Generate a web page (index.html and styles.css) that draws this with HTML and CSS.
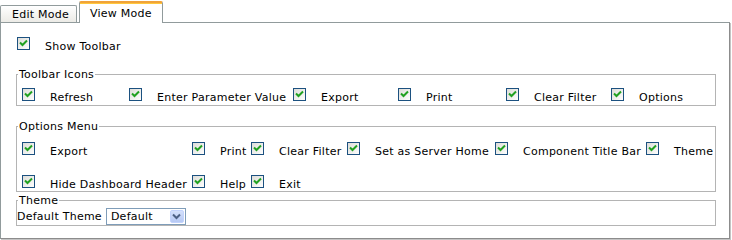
FILE: index.html
```html
<!DOCTYPE html>
<html>
<head>
<meta charset="utf-8">
<link rel="stylesheet" href="styles.css">
</head>
<body>
<svg width="0" height="0" class="defs" aria-hidden="true">
  <defs>
    <linearGradient id="cbg" x1="0" y1="0" x2="1" y2="1">
      <stop offset="0" stop-color="#dcdcd7"/>
      <stop offset="1" stop-color="#ffffff"/>
    </linearGradient>
    <symbol id="check" viewBox="0 0 13 13">
      <rect x="0.5" y="0.5" width="12" height="12" fill="url(#cbg)" stroke="#1c5180"/>
      <path d="M3 5.5 L5.5 8 L10 3.5" fill="none" stroke="#21a121" stroke-width="2"/>
    </symbol>
  </defs>
</svg>

<div class="tabs">
  <div class="tab">Edit Mode</div>
  <div class="tab active">View Mode</div>
</div>

<div class="panel">
  <label class="opt show"><svg class="cb"><use href="#check"/></svg>Show Toolbar</label>

  <fieldset class="group toolbar">
    <legend>Toolbar Icons</legend>
    <div class="grid tb-grid">
      <label class="opt"><svg class="cb"><use href="#check"/></svg>Refresh</label>
      <label class="opt"><svg class="cb"><use href="#check"/></svg>Enter Parameter Value</label>
      <label class="opt"><svg class="cb"><use href="#check"/></svg>Export</label>
      <label class="opt"><svg class="cb"><use href="#check"/></svg>Print</label>
      <label class="opt"><svg class="cb"><use href="#check"/></svg>Clear Filter</label>
      <label class="opt"><svg class="cb"><use href="#check"/></svg>Options</label>
    </div>
  </fieldset>

  <fieldset class="group options">
    <legend>Options Menu</legend>
    <div class="grid om-grid">
      <label class="opt"><svg class="cb"><use href="#check"/></svg>Export</label>
      <label class="opt"><svg class="cb"><use href="#check"/></svg>Print</label>
      <label class="opt"><svg class="cb"><use href="#check"/></svg>Clear Filter</label>
      <label class="opt"><svg class="cb"><use href="#check"/></svg>Set as Server Home</label>
      <label class="opt"><svg class="cb"><use href="#check"/></svg>Component Title Bar</label>
      <label class="opt"><svg class="cb"><use href="#check"/></svg>Theme</label>
      <label class="opt"><svg class="cb"><use href="#check"/></svg>Hide Dashboard Header</label>
      <label class="opt"><svg class="cb"><use href="#check"/></svg>Help</label>
      <label class="opt"><svg class="cb"><use href="#check"/></svg>Exit</label>
    </div>
  </fieldset>

  <fieldset class="group theme">
    <legend>Theme</legend>
    <div class="theme-row">
      <span class="theme-label">Default Theme</span>
      <div class="select">
        <span class="select-text">Default</span>
        <span class="select-btn">
          <svg width="9" height="7" viewBox="0 0 9 7"><path d="M1 1.5 L4.5 5 L8 1.5" fill="none" stroke="#4d6185" stroke-width="2"/></svg>
        </span>
      </div>
    </div>
  </fieldset>
</div>
</body>
</html>
```

FILE: styles.css
```css
* { box-sizing: border-box; }

html, body {
  margin: 0;
  padding: 0;
  background: #ffffff;
}

body {
  font-family: "DejaVu Sans", Verdana, sans-serif;
  font-size: 11px;
  line-height: 13px;
  letter-spacing: 0.25px;
  color: #000000;
  width: 732px;
  height: 240px;
  overflow: hidden;
}

.defs {
  position: absolute;
  width: 0;
  height: 0;
}

/* Tabs */
.tabs {
  display: flex;
  align-items: flex-end;
  height: 22px;
}

.tab {
  height: 17px;
  width: 77px;
  padding-left: 11px;
  padding-top: 2px;
  border: 1px solid #919b9c;
  border-bottom: none;
  border-radius: 2px 2px 0 0;
  background: linear-gradient(#ffffff, #ecebe6);
  white-space: nowrap;
}

.tab.active {
  position: relative;
  z-index: 2;
  height: 22px;
  width: 84px;
  margin-left: 2px;
  margin-bottom: -1px;
  padding-left: 10px;
  padding-top: 4px;
  background: #ffffff;
  border-top: 2px solid #f0a33a;
  box-shadow: inset 0 1px 0 #ffc83c;
}

/* Panel */
.panel {
  position: relative;
  z-index: 1;
  width: 730px;
  height: 217px;
  border: 1px solid #919b9c;
  border-right-color: #8c8c8c;
  border-bottom-color: #8c8c8c;
  box-shadow: 1px 1px 0 #c4c4c4;
  padding: 14px 0 0 15px;
  background: #ffffff;
}

.opt {
  white-space: nowrap;
}

.cb {
  width: 13px;
  height: 13px;
  margin-right: 15px;
  vertical-align: baseline;
}

.show {
  display: block;
  padding-left: 1px;
}

/* Fieldsets */
.group {
  margin: 0;
  width: 700px;
  border: 1px solid #b4b4b4;
  min-width: 0;
}

.group legend {
  padding: 0 1px;
  margin-left: -4px;
  line-height: 13px;
}

.toolbar {
  margin-top: 15px;
  padding: 7px 0 1px 5px;
}

.options {
  margin-top: 14px;
  padding: 9px 0 0 5px;
}

.theme {
  margin-top: 2px;
  padding: 1px 0 0 0;
}

.theme legend {
  margin-left: 1px;
}

.grid {
  display: grid;
  grid-auto-rows: 16px;
}

.tb-grid {
  grid-template-columns: 107px 164px 105px 108px 105px auto;
}

.om-grid {
  grid-template-columns: 170px 59px 96px 148px 151px auto;
  row-gap: 17px;
}

/* Theme row */
.theme-row {
  display: flex;
  align-items: center;
  height: 17px;
}

.theme-label {
  margin-right: 4px;
}

.select {
  display: flex;
  align-items: center;
  justify-content: space-between;
  width: 80px;
  height: 17px;
  border: 1px solid #7f9db9;
  background: #ffffff;
  padding: 0 1px 0 4px;
}

.select-btn {
  display: flex;
  align-items: center;
  justify-content: center;
  width: 14px;
  height: 13px;
  border-radius: 2px;
  background: linear-gradient(#d4e0fb, #b6c9f4);
  border: 1px solid #c3d3fd;
}
```
